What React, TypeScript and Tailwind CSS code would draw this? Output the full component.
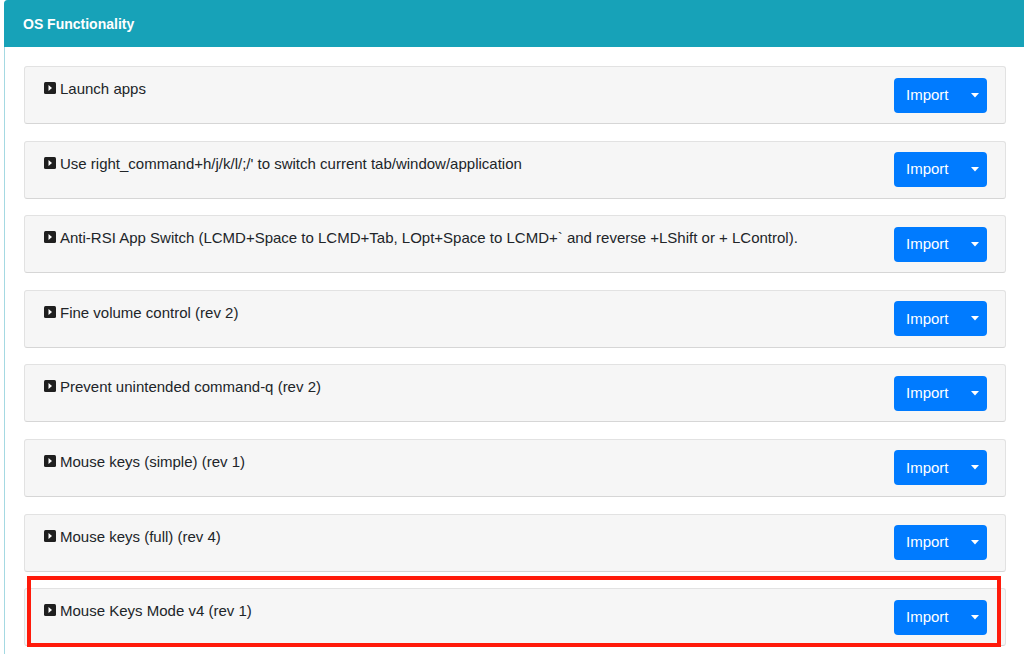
import React from "react";

const items = [
  "Launch apps",
  "Use right_command+h/j/k/l/;/' to switch current tab/window/application",
  "Anti-RSI App Switch (LCMD+Space to LCMD+Tab, LOpt+Space to LCMD+` and reverse +LShift or + LControl).",
  "Fine volume control (rev 2)",
  "Prevent unintended command-q (rev 2)",
  "Mouse keys (simple) (rev 1)",
  "Mouse keys (full) (rev 4)",
  "Mouse Keys Mode v4 (rev 1)",
];

function PlayIcon() {
  return (
    <svg width="12" height="12" viewBox="0 0 12 12" className="shrink-0">
      <rect x="0" y="0" width="12" height="12" rx="1.5" fill="#1f1f1f" />
      <path d="M4.5 3 L8 6 L4.5 9 Z" fill="#ffffff" />
    </svg>
  );
}

function Row({ text, highlight }: { text: string; highlight?: boolean }) {
  return (
    <div className="relative">
      <div className="h-[58px] bg-[#f6f6f6] border border-[#e2e2e2] border-b-[#d6d6d6] rounded-[3px] flex justify-between pl-[19px] pr-[18px]">
        <div className="flex items-start gap-[4px] pt-[13px]">
          <div className="mt-[2px]">
            <PlayIcon />
          </div>
          <span className="text-[15px] leading-[18px] text-[#212529]">{text}</span>
        </div>
        <div className="flex items-center">
          <div className="h-[35px] w-[93px] bg-[#007bff] rounded-[4px] flex items-center text-white">
            <span className="text-[15px] pl-[12px] w-[68px]">Import</span>
            <span className="flex-1 flex justify-center">
              <svg width="8" height="5" viewBox="0 0 8 5">
                <path d="M0 0 L8 0 L4 4.5 Z" fill="#ffffff" />
              </svg>
            </span>
          </div>
        </div>
      </div>
      {highlight && (
        <div className="absolute left-[3px] right-[5px] top-[-12px] bottom-[-1px] border-[4px] border-[#ff1a0a] pointer-events-none" />
      )}
    </div>
  );
}

export default function App() {
  return (
    <div className="w-[1024px] h-[654px] overflow-hidden bg-white" style={{ fontFamily: '"Liberation Sans", Arial, sans-serif' }}>
      <div className="ml-[4px] border border-r-0 border-[#a4d9e2] rounded-tl-[4px]">
        <div className="h-[47px] bg-[#17a2b8] flex items-center pl-[19px] pt-[2px] -mt-px -ml-px rounded-tl-[4px]">
          <span className="text-white font-bold text-[14px]">OS Functionality</span>
        </div>
        <div className="pl-[19px] pr-[18px] pt-[19px] flex flex-col gap-[16.6px]">
          {items.map((t, i) => (
            <Row key={i} text={t} highlight={i === 7} />
          ))}
          <div className="h-[40px]" />
        </div>
      </div>
    </div>
  );
}
